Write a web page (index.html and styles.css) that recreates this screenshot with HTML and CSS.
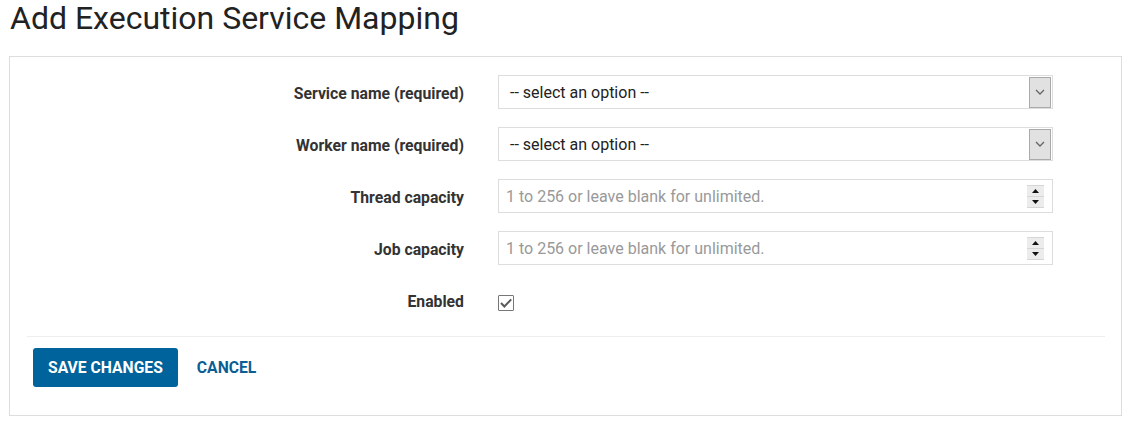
FILE: index.html
```html
<!DOCTYPE html>
<html lang="en">
<head>
<meta charset="utf-8">
<title>Add Execution Service Mapping</title>
<link rel="stylesheet" href="styles.css">
</head>
<body>
<h1 class="page-title">Add Execution Service Mapping</h1>
<div class="panel">
  <form class="form">
    <div class="row">
      <label class="label">Service name (required)</label>
      <div class="field select">
        <span class="select-text">-- select an option --</span>
        <span class="select-btn"><svg width="10" height="6" viewBox="0 0 10 6"><path d="M1 1 L5 5 L9 1" fill="none" stroke="#666" stroke-width="1.3"/></svg></span>
      </div>
    </div>
    <div class="row">
      <label class="label">Worker name (required)</label>
      <div class="field select">
        <span class="select-text">-- select an option --</span>
        <span class="select-btn"><svg width="10" height="6" viewBox="0 0 10 6"><path d="M1 1 L5 5 L9 1" fill="none" stroke="#666" stroke-width="1.3"/></svg></span>
      </div>
    </div>
    <div class="row">
      <label class="label">Thread capacity</label>
      <div class="field number">
        <span class="placeholder">1 to 256 or leave blank for unlimited.</span>
        <span class="spinner">
          <span class="spin"><svg width="7" height="4" viewBox="0 0 7 4"><path d="M0 4 L3.5 0 L7 4 Z" fill="#111"/></svg></span>
          <span class="spin"><svg width="7" height="4" viewBox="0 0 7 4"><path d="M0 0 L3.5 4 L7 0 Z" fill="#111"/></svg></span>
        </span>
      </div>
    </div>
    <div class="row">
      <label class="label">Job capacity</label>
      <div class="field number">
        <span class="placeholder">1 to 256 or leave blank for unlimited.</span>
        <span class="spinner">
          <span class="spin"><svg width="7" height="4" viewBox="0 0 7 4"><path d="M0 4 L3.5 0 L7 4 Z" fill="#111"/></svg></span>
          <span class="spin"><svg width="7" height="4" viewBox="0 0 7 4"><path d="M0 0 L3.5 4 L7 0 Z" fill="#111"/></svg></span>
        </span>
      </div>
    </div>
    <div class="row row-last">
      <label class="label">Enabled</label>
      <div class="check-wrap">
        <span class="checkbox"><svg width="14" height="14" viewBox="0 0 14 14"><path d="M2 7 L5.4 10.5 L12.2 3.4" fill="none" stroke="#5a5a5a" stroke-width="2"/></svg></span>
      </div>
    </div>
  </form>
  <div class="actions">
    <button class="btn-primary" type="button">SAVE CHANGES</button>
    <a class="btn-link" href="#">CANCEL</a>
  </div>
</div>
</body>
</html>
```
FILE: styles.css
```css
html, body {
  margin: 0;
  padding: 0;
  background: #fff;
  font-family: Roboto, "Liberation Sans", Arial, sans-serif;
}

.page-title {
  margin: 0 0 21px 10px;
  padding-top: 1px;
  font-size: 32px;
  line-height: 34px;
  font-weight: 400;
  color: #222;
}

.panel {
  margin-left: 9px;
  width: 1113px;
  height: 360px;
  box-sizing: border-box;
  border: 1px solid #ddd;
  padding-top: 18px;
}

.form {
  margin: 0;
}

.row {
  display: grid;
  grid-template-columns: 454px 555px;
  column-gap: 34px;
  align-items: center;
  height: 34px;
  margin-bottom: 18px;
}

.row-last {
  margin-bottom: 19px;
}

.label {
  text-align: right;
  font-size: 15.75px;
  font-weight: 700;
  color: #333;
  padding-top: 3px;
}

.field {
  box-sizing: border-box;
  height: 34px;
  border: 1px solid #ddd;
  display: flex;
  align-items: center;
  font-size: 16px;
}

.select-text {
  flex: 1;
  padding-left: 11px;
  color: #222;
}

.select-btn {
  box-sizing: border-box;
  width: 22px;
  height: 31px;
  margin-right: 1px;
  background: #e1e1e1;
  border: 1px solid #aaa;
  display: flex;
  align-items: center;
  justify-content: center;
}

.placeholder {
  flex: 1;
  padding-left: 7px;
  color: #999;
}

.spinner {
  display: flex;
  flex-direction: column;
  width: 17px;
  margin-right: 8px;
  gap: 1px;
  background: #d6d6d6;
  padding: 1px 0;
}

.spin {
  height: 10px;
  background: #ececec;
  display: flex;
  align-items: center;
  justify-content: center;
}

.check-wrap {
  display: flex;
  align-items: center;
  height: 34px;
}

.checkbox {
  box-sizing: border-box;
  width: 16px;
  height: 16px;
  margin-top: 5px;
  border: 1px solid #777;
  border-radius: 1px;
  display: flex;
  align-items: center;
  justify-content: center;
}

.actions {
  margin: 0 16px 0 17px;
  border-top: 1px solid #eee;
  padding: 11px 0 0 6px;
  display: flex;
  align-items: center;
}

.btn-primary {
  height: 39px;
  padding: 0 15px;
  border: 0;
  border-radius: 3px;
  background: #00639b;
  color: #fff;
  font-family: Roboto, "Liberation Sans", Arial, sans-serif;
  font-size: 15.7px;
  font-weight: 700;
}

.btn-link {
  margin-left: 19px;
  color: #0a5e96;
  font-size: 15.7px;
  font-weight: 700;
  text-decoration: none;
}
```
